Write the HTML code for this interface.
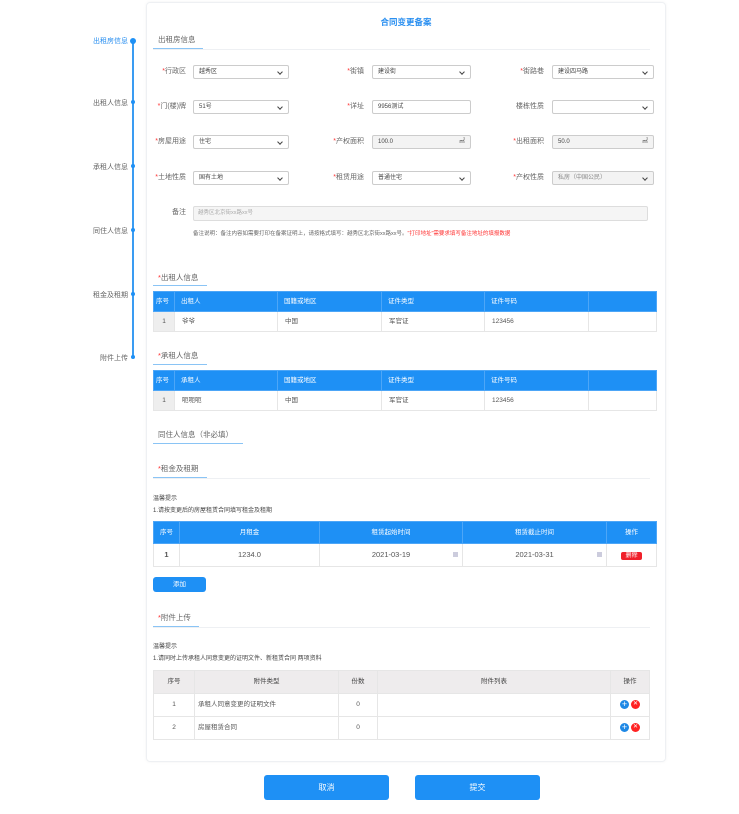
<!DOCTYPE html>
<html><head><meta charset="utf-8"><style>
*{box-sizing:border-box;margin:0;padding:0}
body{width:739px;height:814px;background:#fff;font-family:"Liberation Sans","Noto Sans CJK SC",sans-serif;font-size:7px;color:#555;position:relative;overflow:hidden}
.abs{position:absolute}
.card{position:absolute;left:146px;top:2px;width:520px;height:760px;border:1px solid #eef0f3;border-radius:4px;box-shadow:0 0 3px rgba(0,0,0,.05)}
.title{left:146px;width:520px;top:16px;text-align:center;color:#2a8ff0;font-size:8.5px;font-weight:bold}
.sec{font-size:7.5px;color:#666;padding-left:5px}
.ul{height:1px;background:#8ac4f5}
.hl{height:1px;background:#eef0f3}
.lbl{text-align:right;width:60px;font-size:7px;color:#666;line-height:14px;height:14px}
.lbl i{color:#f33;font-style:normal}
.sel{height:14px;border:1px solid #ccc;border-radius:2px;font-size:6px;color:#444;padding:0 5px;line-height:12px;background:#fff}
.sel.g{background:#f3f3f3}
.sel:after{content:"";position:absolute;right:6px;top:4px;width:3px;height:3px;border-right:1px solid #444;border-bottom:1px solid #444;transform:rotate(45deg)}
.star{color:#f33}
table{border-collapse:collapse;position:absolute;font-size:6.5px}
td,th{border:1px solid #e6e6e6;font-weight:normal;vertical-align:middle;line-height:10px}
.blue th{background:#1e90f5;color:#fff;text-align:left;padding-left:6px;border-color:#4da6f7}
.nav{color:#666;font-size:7px;text-align:right;width:60px}
.dot{width:4px;height:4px;border-radius:50%;background:#1e90f5}
.btn{background:#1e90f5;color:#fff;text-align:center;border-radius:3px}
.ic{display:inline-block;width:9px;height:9px;border-radius:50%;color:#fff;text-align:center;vertical-align:middle;margin:0 1px}
</style></head><body>
<div class="abs" style="left:132px;top:40px;width:2px;height:318px;background:#3a9cf2"></div>
<div class="abs nav" style="left:68px;top:36px;color:#2a8ff0">出租房信息</div><div class="abs dot" style="top:38px;width:6px;height:6px;left:130px"></div>
<div class="abs nav" style="left:68px;top:98px">出租人信息</div><div class="abs dot" style="left:131px;top:100px"></div>
<div class="abs nav" style="left:68px;top:162px">承租人信息</div><div class="abs dot" style="left:131px;top:164px"></div>
<div class="abs nav" style="left:68px;top:226px">同住人信息</div><div class="abs dot" style="left:131px;top:228px"></div>
<div class="abs nav" style="left:68px;top:290px">租金及租期</div><div class="abs dot" style="left:131px;top:292px"></div>
<div class="abs nav" style="left:68px;top:353px">附件上传</div><div class="abs dot" style="left:131px;top:355px"></div>

<div class="card"></div>
<div class="abs title">合同变更备案</div>
<div class="abs sec" style="left:153px;top:34px">出租房信息</div>
<div class="abs hl" style="left:153px;top:49px;width:497px"></div>
<div class="abs ul" style="left:153px;top:48px;width:50px"></div>

<div class="abs lbl" style="left:126px;top:65px"><i>*</i>行政区</div><div class="abs sel" style="left:193px;top:65px;width:96px">越秀区</div>
<div class="abs lbl" style="left:304px;top:65px"><i>*</i>街镇</div><div class="abs sel" style="left:372px;top:65px;width:99px">建设街</div>
<div class="abs lbl" style="left:484px;top:65px"><i>*</i>街路巷</div><div class="abs sel" style="left:552px;top:65px;width:102px">建设四马路</div>

<div class="abs lbl" style="left:126px;top:100px"><i>*</i>门(楼)牌</div><div class="abs sel" style="left:193px;top:100px;width:96px">51号</div>
<div class="abs lbl" style="left:304px;top:100px"><i>*</i>详址</div><div class="abs" style="left:372px;top:100px;width:99px;height:14px;border:1px solid #ccc;border-radius:2px;font-size:6px;line-height:12px;padding:0 5px;color:#444">9956测试</div>
<div class="abs lbl" style="left:484px;top:100px">楼栋性质</div><div class="abs sel" style="left:552px;top:100px;width:102px"></div>

<div class="abs lbl" style="left:126px;top:135px"><i>*</i>房屋用途</div><div class="abs sel" style="left:193px;top:135px;width:96px">住宅</div>
<div class="abs lbl" style="left:304px;top:135px"><i>*</i>产权面积</div><div class="abs" style="left:372px;top:135px;width:99px;height:14px;border:1px solid #ccc;border-radius:2px;background:#f3f3f3;font-size:6px;line-height:12px;padding:0 5px;color:#444">100.0<span style="float:right">㎡</span></div>
<div class="abs lbl" style="left:484px;top:135px"><i>*</i>出租面积</div><div class="abs" style="left:552px;top:135px;width:102px;height:14px;border:1px solid #ccc;border-radius:2px;background:#f3f3f3;font-size:6px;line-height:12px;padding:0 5px;color:#444">50.0<span style="float:right">㎡</span></div>

<div class="abs lbl" style="left:126px;top:171px"><i>*</i>土地性质</div><div class="abs sel" style="left:193px;top:171px;width:96px">国有土地</div>
<div class="abs lbl" style="left:304px;top:171px"><i>*</i>租赁用途</div><div class="abs sel" style="left:372px;top:171px;width:99px">普通住宅</div>
<div class="abs lbl" style="left:484px;top:171px"><i>*</i>产权性质</div><div class="abs sel g" style="left:552px;top:171px;width:102px;color:#888">私房（中国公民）</div>

<div class="abs lbl" style="left:126px;top:206px">备注</div><div class="abs" style="left:193px;top:206px;width:455px;height:15px;border:1px solid #ddd;border-radius:2px;background:#f5f5f5;font-size:5.5px;color:#aaa;padding:0 4px;line-height:13px">越秀区北京街xx路xx号</div>
<div class="abs" style="left:193px;top:229px;font-size:5.5px;color:#666">备注说明：备注内容如需要打印在备案证明上，请按格式填写：越秀区北京街xx路xx号。<span style="color:#f33">"打印地址"需要求填写备注地址的填报数据</span></div>

<div class="abs sec" style="left:153px;top:272px"><span class="star">*</span>出租人信息</div>
<div class="abs ul" style="left:153px;top:285px;width:54px"></div>
<table style="left:153px;top:291px;width:504px">
<tr class="blue" style="height:20px"><th style="width:21px;padding-left:2px">序号</th><th style="width:103px">出租人</th><th style="width:104px">国籍或地区</th><th style="width:103px">证件类型</th><th style="width:104px">证件号码</th><th></th></tr>
<tr style="height:20px"><td style="background:#eee;text-align:center">1</td><td style="padding-left:7px">爷爷</td><td style="padding-left:7px">中国</td><td style="padding-left:7px">军官证</td><td style="padding-left:7px">123456</td><td></td></tr></table>

<div class="abs sec" style="left:153px;top:350px"><span class="star">*</span>承租人信息</div>
<div class="abs ul" style="left:153px;top:364px;width:54px"></div>
<table style="left:153px;top:370px;width:504px">
<tr class="blue" style="height:20px"><th style="width:21px;padding-left:2px">序号</th><th style="width:103px">承租人</th><th style="width:104px">国籍或地区</th><th style="width:103px">证件类型</th><th style="width:104px">证件号码</th><th></th></tr>
<tr style="height:20px"><td style="background:#eee;text-align:center">1</td><td style="padding-left:7px">呃呃呃</td><td style="padding-left:7px">中国</td><td style="padding-left:7px">军官证</td><td style="padding-left:7px">123456</td><td></td></tr></table>

<div class="abs sec" style="left:153px;top:429px">同住人信息（非必填）</div>
<div class="abs ul" style="left:153px;top:443px;width:90px"></div>
<div class="abs sec" style="left:153px;top:463px"><span class="star">*</span>租金及租期</div>
<div class="abs hl" style="left:153px;top:478px;width:497px"></div>
<div class="abs ul" style="left:153px;top:477px;width:54px"></div>
<div class="abs" style="left:153px;top:493px;font-size:6px;color:#444">温馨提示</div>
<div class="abs" style="left:153px;top:505px;font-size:6px;color:#444">1.请按变更后的房屋租赁合同填写租金及租期</div>
<table style="left:153px;top:521px;width:504px;text-align:center">
<tr class="blue" style="height:22px"><th style="width:26px;text-align:center;padding:0">序号</th><th style="width:140px;text-align:center;padding:0">月租金</th><th style="width:143px;text-align:center;padding:0">租赁起始时间</th><th style="width:144px;text-align:center;padding:0">租赁截止时间</th><th style="text-align:center;padding:0">操作</th></tr>
<tr style="height:23px;font-size:7.5px"><td style="font-weight:bold">1</td><td>1234.0</td><td style="position:relative">2021-03-19<span style="position:absolute;right:4px;top:8px;width:5px;height:5px;background:#ccd"></span></td><td style="position:relative">2021-03-31<span style="position:absolute;right:4px;top:8px;width:5px;height:5px;background:#ccd"></span></td><td><span style="background:#f0202a;color:#fff;padding:1px 4px;border-radius:2px;font-size:6px">删除</span></td></tr></table>
<div class="abs btn" style="left:153px;top:577px;width:53px;height:15px;font-size:6.5px;line-height:15px">添加</div>

<div class="abs sec" style="left:153px;top:612px"><span class="star">*</span>附件上传</div>
<div class="abs hl" style="left:153px;top:627px;width:497px"></div>
<div class="abs ul" style="left:153px;top:626px;width:46px"></div>
<div class="abs" style="left:153px;top:641px;font-size:6px;color:#444">温馨提示</div>
<div class="abs" style="left:153px;top:653px;font-size:6px;color:#444">1.请同时上传承租人同意变更的证明文件、新租赁合同 两项资料</div>
<table style="left:153px;top:670px;width:497px;text-align:center">
<tr style="height:23px;background:#eeeced;color:#444"><th style="width:41px">序号</th><th style="width:144px">附件类型</th><th style="width:39px">份数</th><th style="width:233px">附件列表</th><th>操作</th></tr>
<tr style="height:23px"><td>1</td><td style="text-align:left;padding-left:3px">承租人同意变更的证明文件</td><td>0</td><td></td><td><span class="ic" style="background:#1e88e5;font-size:9px;line-height:9px">+</span><span class="ic" style="background:#f22;font-size:6px;line-height:9px">✕</span></td></tr>
<tr style="height:23px"><td>2</td><td style="text-align:left;padding-left:3px">房屋租赁合同</td><td>0</td><td></td><td><span class="ic" style="background:#1e88e5;font-size:9px;line-height:9px">+</span><span class="ic" style="background:#f22;font-size:6px;line-height:9px">✕</span></td></tr></table>

<div class="abs btn" style="left:264px;top:775px;width:125px;height:25px;line-height:25px;font-size:8px">取消</div>
<div class="abs btn" style="left:415px;top:775px;width:125px;height:25px;line-height:25px;font-size:8px">提交</div>
</body></html>
